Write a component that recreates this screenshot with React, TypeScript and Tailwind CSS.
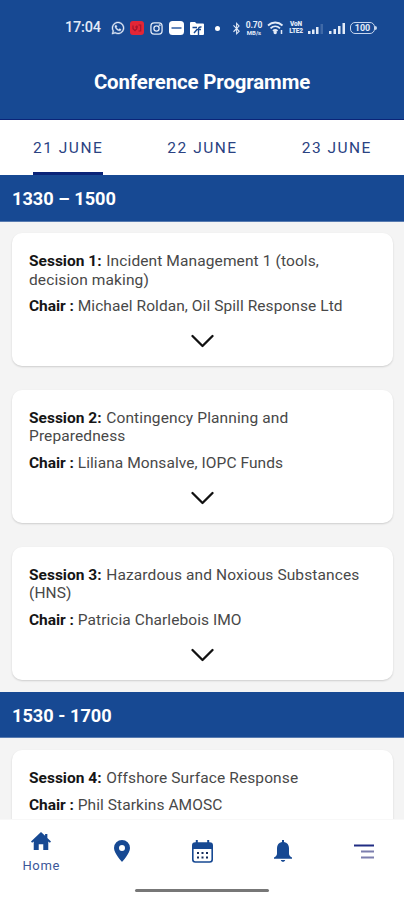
import { FaWhatsapp, FaBluetoothB } from "react-icons/fa";

const sessions = [
  { id: 1, lines: ["Incident Management 1 (tools,", "decision making)"], chair: "Michael Roldan, Oil Spill Response Ltd" },
  { id: 2, lines: ["Contingency Planning and", "Preparedness"], chair: "Liliana Monsalve, IOPC Funds" },
  { id: 3, lines: ["Hazardous and Noxious Substances", "(HNS)"], chair: "Patricia Charlebois IMO" },
  { id: 4, lines: ["Offshore Surface Response"], chair: "Phil Starkins AMOSC" },
];

function StatusBar() {
  return (
    <div className="flex h-[56px] items-center pl-[65px] text-[#e3ebf8]">
      <span className="w-[46px] whitespace-nowrap text-[14.5px] font-medium tracking-[-0.2px]">17:04</span>
      <FaWhatsapp className="mr-[5px] size-[14px]" strokeWidth={14} stroke="currentColor" />
      <svg className="mr-[6px] size-[14px]" viewBox="0 0 14 14">
        <rect width="14" height="14" rx="3" fill="#e32636" />
        <path d="M3 4.5v3.2l2 2 1.8-2V4.5M8.5 4h2.2v6H8.5M5 6h3" fill="none" stroke="#a3152d" strokeWidth="1.2" />
      </svg>
      <svg className="mr-[6px] size-[13px]" viewBox="0 0 14 14" fill="none" stroke="currentColor" strokeWidth="1.4">
        <rect x="1" y="1" width="12" height="12" rx="3.5" />
        <circle cx="7" cy="7" r="2.8" />
        <circle cx="10.4" cy="3.6" r=".4" />
      </svg>
      <svg className="mr-[6px] h-[14px] w-[15px]" viewBox="0 0 15 14">
        <rect width="15" height="14" rx="3.5" fill="#fff" />
        <path d="M2.5 7h10" stroke="#5279b4" strokeWidth="1.8" />
      </svg>
      <svg className="h-[13px] w-[14px]" viewBox="0 0 14 13">
        <path d="M1 0h4l1.5 1.5H13a1 1 0 0 1 1 1V12a1 1 0 0 1-1 1H1a1 1 0 0 1-1-1V1a1 1 0 0 1 1-1Z" fill="#fff" />
        <path d="M2.5 5.500h4.500M8.500 13V7.300C8.500 5.500 9.500 4.700 11.500 5M4 11l3-3.500h4" fill="none" stroke="#174993" strokeWidth="1.400" />
      </svg>
      <span className="ml-[11px] size-[5px] rounded-full bg-white" />
      <FaBluetoothB className="ml-[11px] h-[13px] w-[11px]" />
      <span className="ml-[3px] flex w-[18px] flex-col items-center font-bold">
        <span className="text-[8.500px] leading-[8px] tracking-[-0.200px]">0.70</span>
        <span className="text-[6px] leading-[7px]">MB/s</span>
      </span>
      <svg className="ml-[4px] h-[14px] w-[17px]" viewBox="0 0 17 14" fill="none" stroke="currentColor" strokeWidth="1.8">
        <path d="M1 4.5c4.3-4 10.200-4 14.500 0M3.500 7.300c2.800-2.600 6.700-2.600 9.500 0M6 10c1.300-1.200 3.200-1.200 4.500 0" />
        <circle cx="8.200" cy="11.500" r=".8" />
        <path d="M14.500 9v4" strokeWidth="1.500" />
      </svg>
      <span className="ml-[5px] flex w-[14px] flex-col items-center text-[6.500px] leading-[7px] font-black tracking-[-0.200px]">
        <span>VoN</span>
        <span>LTE2</span>
      </span>
      <svg className="ml-[5px] h-[13px] w-[16px]" viewBox="0 0 16 13" fill="currentColor">
        <path d="M0 9h2.500v3H0zM4 7.500h2.500V12H4zM8 5h2.500v7H8z" />
        <path d="M12.500 2H15v10h-2.500z" opacity=".2" />
      </svg>
      <svg className="ml-[5px] h-[13px] w-[17px]" viewBox="0 0 17 13" fill="currentColor">
        <path d="M0 9h2.500v3H0zM4.500 7H7v5H4.500zM9 4h2.500v8H9zM13.500 1H16v11h-2.500z" />
      </svg>
      <span className="ml-[4px] flex h-[12px] w-[25px] items-center justify-center rounded-[5px] border border-[#c7d6ee] text-[9px] leading-none font-bold">
        100
      </span>
      <span className="h-[4px] w-[1.5px] rounded-r bg-[#c7d6ee]" />
    </div>
  );
}

function SectionBar({ children }: { children: string }) {
  return (
    <h2 className="flex h-[46.500px] shrink-0 items-center border-b border-[#587bb0] bg-[#174993] pt-[2px] pl-[12px] text-[18.200px] font-bold text-white">
      {children}
    </h2>
  );
}

function SessionCard({ session }: { session: (typeof sessions)[number] }) {
  return (
    <article className="mr-[11px] ml-[12px] h-[133px] shrink-0 rounded-[10px] bg-white pt-[19px] pl-[17px] text-[15.500px] leading-[18.300px] tracking-[0.110px] whitespace-nowrap text-[#484848] shadow-[0_1px_2px_rgba(0,0,0,0.16)]">
      <h3>
        <span className="mr-[0.800px] font-bold tracking-normal text-[#151515]">Session {session.id}:</span> {session.lines[0]}
        {session.lines[1] && <span className="block">{session.lines[1]}</span>}
      </h3>
      <p className="mt-[8px]">
        <span className="font-bold tracking-[-0.050px] text-[#151515]">Chair :</span> <span className="tracking-[0.070px]">{session.chair}</span>
      </p>
      <svg className="mt-[19px] ml-[161px] h-[14px] w-[24px]" viewBox="0 0 24 14" fill="none" stroke="#111" strokeWidth="2.300" strokeLinecap="round" strokeLinejoin="round">
        <path d="m2.500 2 10 10 10-10" />
      </svg>
    </article>
  );
}

function BottomNav() {
  return (
    <nav className="h-[81px] shrink-0 border-t border-[#f8f8f8] bg-white text-[#174993]">
      <div className="ml-[1px] grid h-[62px] grid-cols-5 items-center justify-items-center">
        <div className="flex flex-col items-center pt-[5px]">
          <svg className="h-[19px] w-[20px]" viewBox="0 0 22 20" preserveAspectRatio="none" fill="currentColor">
            <path d="M11 0 0 10l1.200 1.300L3 10v9h5.500v-6h5v6H19v-9l1.800 1.300L22 10l-4-3.700V2h-2.500v2Z" />
          </svg>
          <span className="mt-[6px] text-[13px] leading-[18px] tracking-[0.700px] text-[#3c5799]">Home</span>
        </div>
        <svg className="h-[22px] w-[16px]" viewBox="0 0 16 22" fill="currentColor">
          <path fillRule="evenodd" d="M8 0a8 8 0 0 1 8 8c0 5.500-8 14-8 14S0 13.500 0 8a8 8 0 0 1 8-8Zm0 5a3 3 0 1 0 0 6 3 3 0 0 0 0-6Z" />
        </svg>
        <svg className="h-[23px] w-[21px]" viewBox="0 0 21 23" fill="none">
          <rect x=".8" y="3" width="19.400" height="19" rx="2.500" stroke="currentColor" strokeWidth="1.600" />
          <path d="M1 3h19v6H1zM3.800 0h2v4h-2zM15.200 0h2v4h-2z" fill="currentColor" />
          <path d="M5 13h2m2.500 0h2m2.500 0h2M5 17.500h2m2.500 0h2m2.500 0h2" stroke="#142c5c" strokeWidth="2" />
        </svg>
        <svg className="h-[22px] w-[18px]" viewBox="0 0 18 22" fill="currentColor">
          <path d="M8 0h2v2c3.200.6 5 3 5 6v5.500c0 1.800 1 3 3 4v1.200H0v-1.200c2-1 3-2.200 3-4V8c0-3 1.800-5.400 5-6ZM6.800 20h4.400c-.4 2.400-4 2.400-4.400 0Z" />
        </svg>
        <svg className="ml-[1px] h-[15px] w-[20px]" viewBox="0 0 20 15">
          <path d="M0 1.500h20" stroke="#202c83" strokeWidth="2" />
          <path d="M7 7.500h13M7 13.500h13" stroke="#7c7eae" strokeWidth="2.200" />
        </svg>
      </div>
      <div className="mx-auto mt-[7px] h-[3px] w-[134px] rounded-full bg-[#777]" />
    </nav>
  );
}

export default function App() {
  return (
    <div className="flex h-[900px] w-[404px] flex-col overflow-hidden bg-[#f4f4f4] font-[Roboto,sans-serif]">
      <header className="h-[120px] shrink-0 border-b border-[#0b2478] bg-[#174993]">
        <StatusBar />
        <h1 className="mt-[11px] text-center text-[20.400px] leading-[30px] font-bold tracking-[-0.120px] text-white">Conference Programme</h1>
      </header>
      <div className="grid h-[55px] shrink-0 grid-cols-3 justify-items-center bg-white pl-[1px] text-[15.500px] text-[#2a4282]">
        <button className="h-full border-b-[3px] border-[#0b2478] pt-[5px] tracking-[1.500px] whitespace-nowrap">21 JUNE</button>
        <button className="h-full border-b-[3px] border-transparent pt-[5px] tracking-[1.500px] whitespace-nowrap">22 JUNE</button>
        <button className="h-full border-b-[3px] border-transparent pt-[5px] tracking-[1.500px] whitespace-nowrap">23 JUNE</button>
      </div>
      <main className="flex min-h-0 flex-1 flex-col overflow-hidden">
        <SectionBar>1330 – 1500</SectionBar>
        <div className="flex shrink-0 flex-col gap-[23.900px] pt-[11.800px] pb-[11.700px]">
          {sessions.slice(0, 3).map((s) => (
            <SessionCard key={s.id} session={s} />
          ))}
        </div>
        <SectionBar>1530 - 1700</SectionBar>
        <div className="flex shrink-0 flex-col pt-[12px]">
          <SessionCard session={sessions[3]} />
        </div>
      </main>
      <BottomNav />
    </div>
  );
}
